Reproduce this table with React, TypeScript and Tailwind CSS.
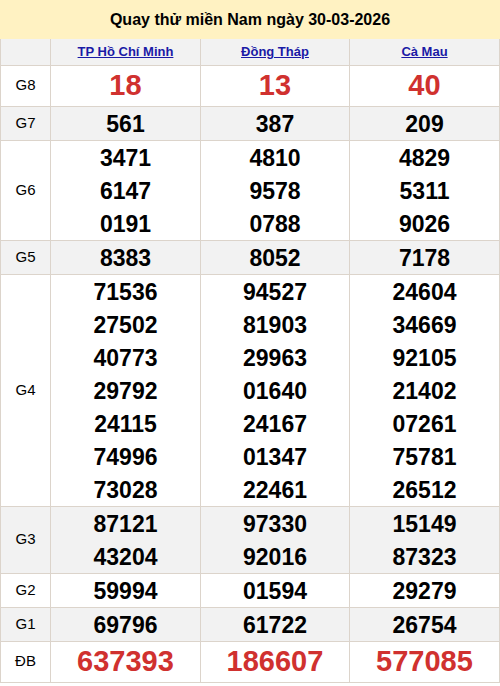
const provinces = ['TP Hồ Chí Minh', 'Đồng Tháp', 'Cà Mau']

type Row = { label: string; values: string[][]; big?: boolean; shaded?: boolean }

const rows: Row[] = [
  { label: 'G8', values: [['18'], ['13'], ['40']], big: true },
  { label: 'G7', values: [['561'], ['387'], ['209']], shaded: true },
  { label: 'G6', values: [['3471', '6147', '0191'], ['4810', '9578', '0788'], ['4829', '5311', '9026']] },
  { label: 'G5', values: [['8383'], ['8052'], ['7178']], shaded: true },
  {
    label: 'G4',
    values: [
      ['71536', '27502', '40773', '29792', '24115', '74996', '73028'],
      ['94527', '81903', '29963', '01640', '24167', '01347', '22461'],
      ['24604', '34669', '92105', '21402', '07261', '75781', '26512'],
    ],
  },
  { label: 'G3', values: [['87121', '43204'], ['97330', '92016'], ['15149', '87323']], shaded: true },
  { label: 'G2', values: [['59994'], ['01594'], ['29279']] },
  { label: 'G1', values: [['69796'], ['61722'], ['26754']], shaded: true },
  { label: 'ĐB', values: [['637393'], ['186607'], ['577085']], big: true },
]

export default function App() {
  return (
    <div className="w-[500px] bg-white font-['Liberation_Sans',Arial,sans-serif] text-black">
      <div className="h-[39px] bg-[#fff2c2] flex items-center justify-center text-[16px] font-bold">
        Quay thử miền Nam ngày 30-03-2026
      </div>
      <table className="w-[500px] border-collapse table-fixed">
        <colgroup>
          <col className="w-[50px]" />
          <col className="w-[150px]" />
          <col className="w-[149px]" />
          <col className="w-[150px]" />
        </colgroup>
        <thead>
          <tr className="bg-[#f2f2f2] h-[26px]">
            <th className="border border-[#dcd4cb] border-t-0" />
            {provinces.map((p) => (
              <th key={p} className="border border-[#dcd4cb] border-t-0 text-[13px] font-bold">
                <a href="#" className="text-[#1a1aa6] underline">{p}</a>
              </th>
            ))}
          </tr>
        </thead>
        <tbody>
          {rows.map((r) => (
            <tr key={r.label} className={r.shaded ? 'bg-[#f2f2f2]' : 'bg-white'}>
              <td className="border border-[#dcd4cb] text-center text-[15px]">{r.label}</td>
              {r.values.map((v, i) => (
                <td key={i} className="border border-[#dcd4cb] text-center p-0">
                  {r.big ? (
                    <div className="h-[40px] flex items-center justify-center text-[29px] font-bold text-[#d0312f]">
                      {v[0]}
                    </div>
                  ) : (
                    v.map((n) => (
                      <div key={n} className="h-[33px] leading-[34px] text-[23px] font-bold">
                        {n}
                      </div>
                    ))
                  )}
                </td>
              ))}
            </tr>
          ))}
        </tbody>
      </table>
    </div>
  )
}
